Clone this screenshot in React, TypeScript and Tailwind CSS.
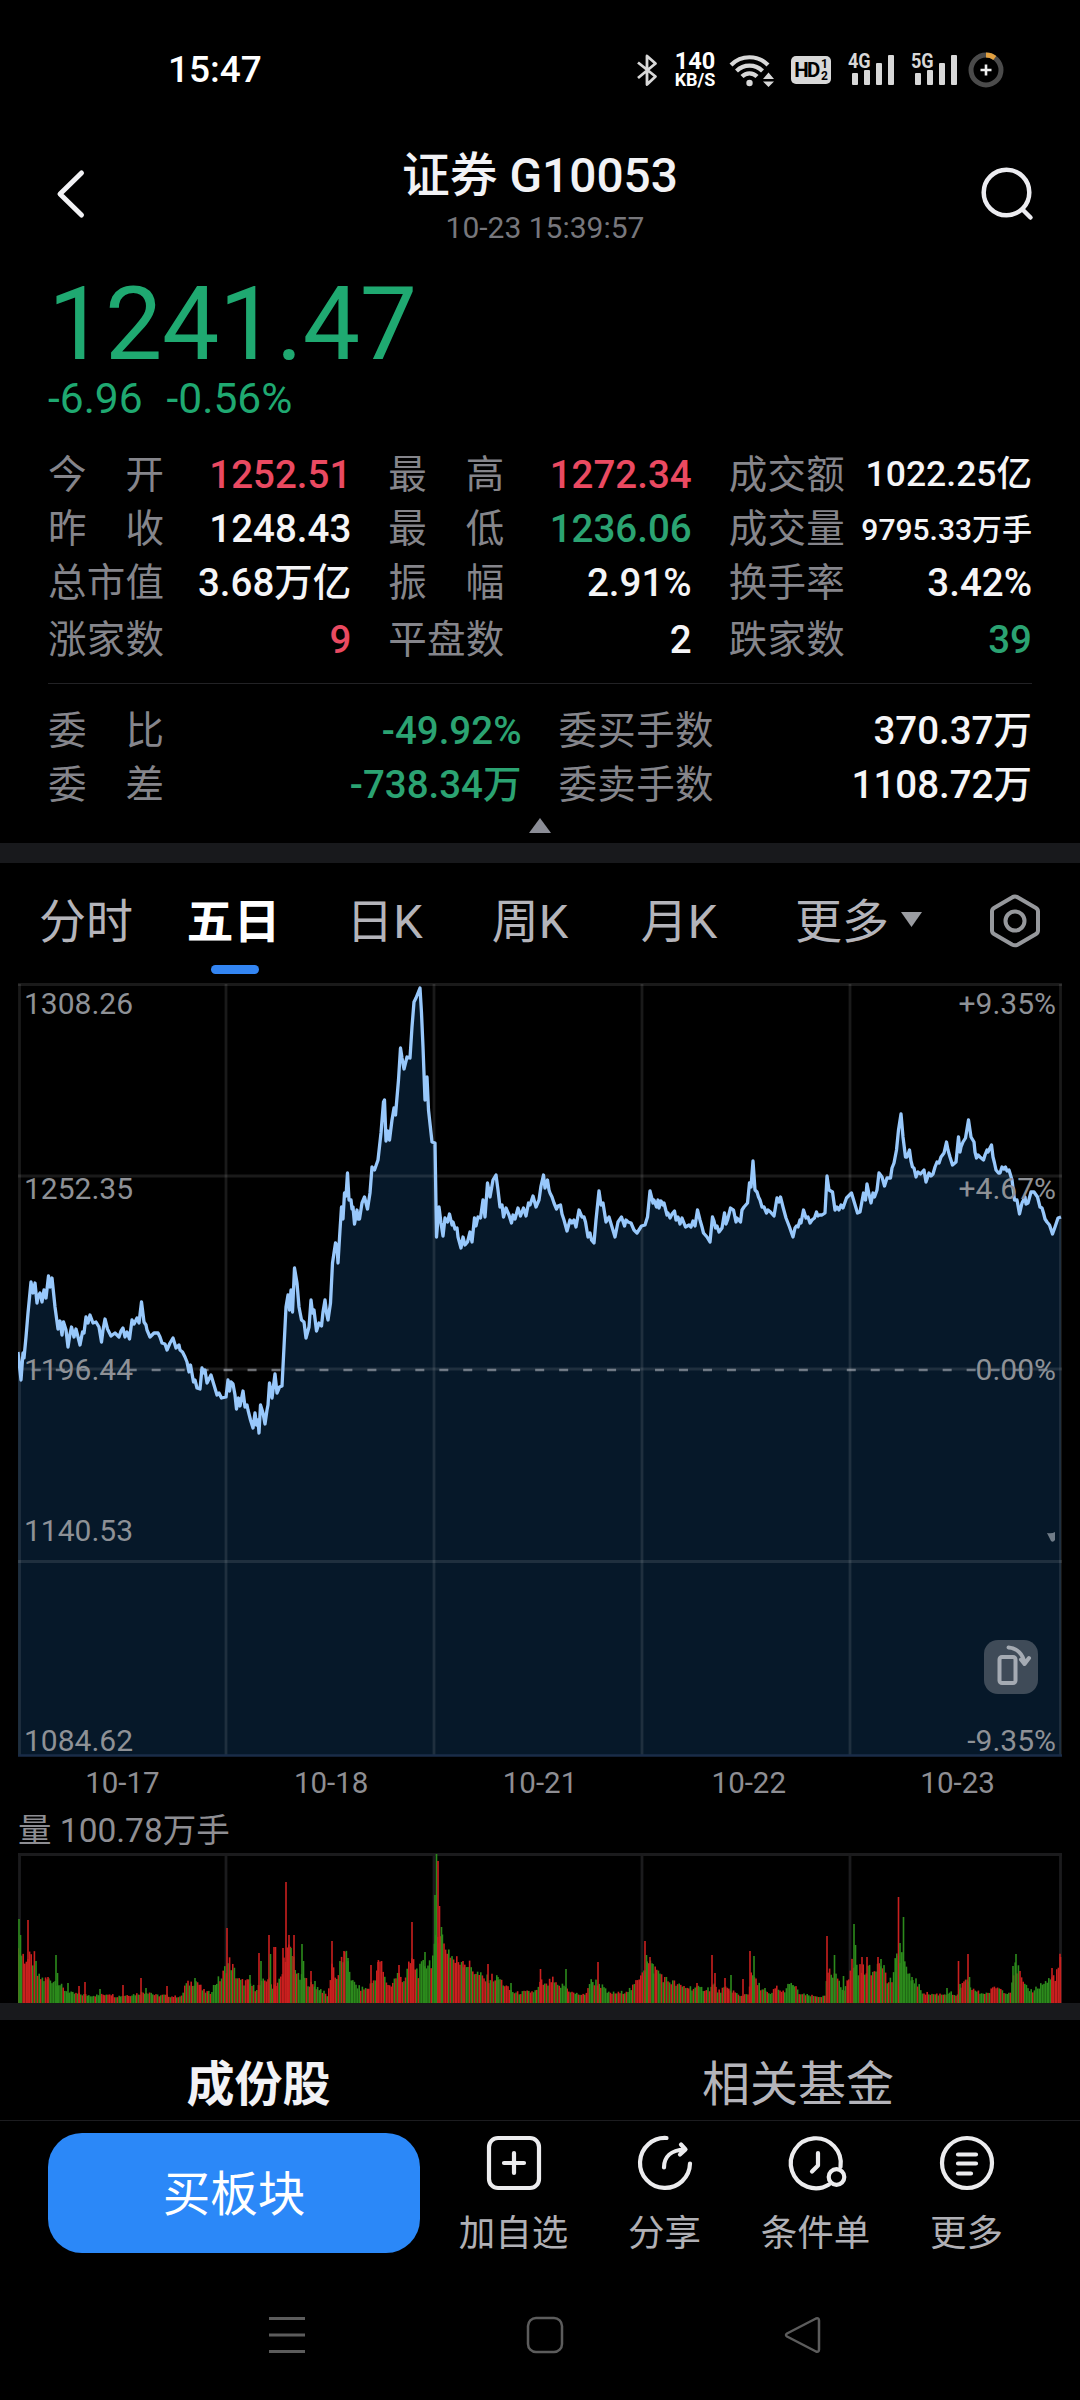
import React from 'react';

type Tone = 'up' | 'down' | 'flat';

const toneClass: Record<Tone, string> = {
  up: 'text-[#ea4a61]',
  down: 'text-[#2ba372]',
  flat: 'text-[#f5f5f7]',
};

type Quote = { label: string; value: string; tone: Tone; size?: string };

const quotes: Quote[] = [
  { label: '今开', value: '1252.51', tone: 'up' },
  { label: '最高', value: '1272.34', tone: 'up' },
  { label: '成交额', value: '1022.25亿', tone: 'flat', size: 'text-[35.5px]' },
  { label: '昨收', value: '1248.43', tone: 'flat' },
  { label: '最低', value: '1236.06', tone: 'down' },
  { label: '成交量', value: '9795.33万手', tone: 'flat', size: 'text-[30px]' },
  { label: '总市值', value: '3.68万亿', tone: 'flat' },
  { label: '振幅', value: '2.91%', tone: 'flat' },
  { label: '换手率', value: '3.42%', tone: 'flat' },
  { label: '涨家数', value: '9', tone: 'up' },
  { label: '平盘数', value: '2', tone: 'flat' },
  { label: '跌家数', value: '39', tone: 'down' },
];

const orders: Quote[] = [
  { label: '委比', value: '-49.92%', tone: 'down' },
  { label: '委买手数', value: '370.37万', tone: 'flat' },
  { label: '委差', value: '-738.34万', tone: 'down' },
  { label: '委卖手数', value: '1108.72万', tone: 'flat' },
];

const tabs = [
  { name: '分时', width: 'w-[146px]' },
  { name: '五日', width: 'w-[149px]' },
  { name: '日K', width: 'w-[153px]' },
  { name: '周K', width: 'w-[138px]' },
  { name: '月K', width: 'w-[160px]' },
];

// Price line, one string per trading day
const priceLine = [
  '18,1352 21,1380 23,1353 24,1358 26,1337 28,1313 31,1282 33,1293 35,1283 37,1303 38,1297 40,1293 42,1302 44,1290 46,1298 48.5,1276 50,1287 52,1278 55,1307 58,1329 60,1321 62,1335 63.5,1322 66,1330 68,1347 70,1334 71.5,1327 74,1337 76,1329 78,1337 80,1345 82.5,1332 84,1333 86,1317 88,1323 90,1315 93,1323 96,1322 99,1327 101.5,1342 103,1330 105,1319 107.5,1329 111,1336 115,1333 119,1337 121,1331 123,1328 125,1337 127,1332 129.5,1339 132,1320 134,1324 137,1318 139,1323 141.5,1302 144,1322 146,1325 147,1330 150,1337 154,1333 158,1333 160,1337 162,1343 165,1344 167,1350 170,1343 173,1338 176,1348 179,1345 180,1350 182.5,1352 185,1357 187,1362 189,1372 190.5,1365 193.5,1382 195,1380 197,1388 200,1389 202,1368 204,1373 205,1370 207,1383 209,1379 211,1375 214,1385 217,1395 219,1393 221.5,1398 226,1397',
  '228,1380 229.5,1391 231,1382 233,1384 235,1395 236.5,1409 238.5,1398 240,1406 243,1391 245,1407 247,1405 248,1410 250.5,1420 253,1428 255,1413 256.5,1425 258,1420 259,1433 260.5,1405 263,1413 265,1424 267,1410 268,1405 269.5,1383 272,1398 275,1374 277,1393 279.5,1387 282,1386 284,1347 286,1307 288,1295 289.5,1310 291,1290 292.5,1312 294.5,1268 297,1283 299,1307 301.5,1320 304,1322 306,1338 309,1327 311,1300 312.5,1313 314,1310 316.5,1331 319,1323 321.5,1326 323,1312 325,1300 326.5,1313 328,1320 330.5,1303 332.5,1263 335.5,1243 337,1246 338,1263 340,1230 341.5,1207 343,1219 344.5,1193 346,1196 347.5,1173 349,1200 351,1200 352,1209 353,1207 354.5,1224 357,1210 358,1219 359.5,1219 362,1203 364.5,1197 367.5,1209 370,1193 372,1167 374.5,1170 378,1160 381,1133 383.5,1102 384.5,1100 386,1141 388,1131 389.5,1140 392,1120 394,1108 395.5,1115 398.5,1080 400.5,1048 402,1058 404,1069 407,1057 410,1058 412,1027 414,1002 416,998 420,988 421.5,1013 423,1047 425,1100 427,1077 428.5,1110 432,1142 435,1143 436.5,1237',
  '439,1207 441,1223 443,1236 445,1218 447.5,1222 449.5,1214 452,1225 453,1222 455,1229 457,1228 458,1237 461,1248 463,1237 465,1245 467.5,1242 470,1232 472,1242 474.5,1218 476,1226 478,1217 480.5,1218 483,1200 485,1217 487.5,1183 490,1197 493,1180 496,1175 498,1190 500,1207 502,1205 503.5,1217 506,1208 509,1215 511.5,1223 513,1215 515,1219 518,1208 520.5,1216 523.5,1208 526,1216 528.5,1203 530,1205 533,1196 536,1207 539,1200 541,1186 543.5,1175 545,1188 547.5,1180 549,1190 550,1193 552,1197 554,1203 556.5,1209 558,1206 560.5,1205 562,1214 564,1220 567,1231 570,1220 572,1223 574,1220 576,1227 579,1210 582,1217 584,1217 585.5,1222 588,1237 590,1233 591.5,1240 594,1243 596,1220 599,1191 601,1205 603,1203 606,1222 609,1217 612,1227 615,1237 618,1222 621.5,1217 624.5,1226 626,1220 628,1222 631,1223 634,1230 637,1233 641.5,1226',
  '645,1225 647.5,1217 650,1191 653,1203 654,1200 656.5,1207 658,1200 659,1208 661,1201 663,1205 664,1203 667,1215 668,1213 670,1218 672,1214 674.5,1211 676,1220 678,1217 680,1224 682,1218 685.5,1227 689,1225 691,1227 693,1221 695,1226 697.5,1210 700,1220 702,1227 703.5,1233 707,1237 710,1242 712.5,1217 714,1221 715.5,1228 717,1226 719,1232 722,1228 724.5,1213 726,1224 727.5,1220 730.5,1208 733.5,1210 736,1222 737,1218 740.5,1222 742,1210 744,1207 747.5,1203 749.5,1183 751,1187 753,1161 755,1190 757,1192 758.5,1197 760,1200 762,1207 764,1207 766.5,1213 768,1210 770.5,1212 774,1216 777,1198 779,1202 780.5,1197 783,1207 786,1218 789.5,1227 793,1237 795,1228 796.5,1226 798,1227 800,1220 801,1223 803.5,1210 806,1218 808,1217 810,1223 812,1220 814.5,1218 816.5,1212 818,1216 819.5,1215 822,1215 825,1213 827,1176 829,1190 832.5,1192 835,1210 837,1207 839,1210 841,1205 843,1208 846.5,1198 851.5,1193',
  '854.5,1203 857.5,1213 860,1212 863.5,1193 865.5,1200 867,1184 869,1194 871,1203 873,1193 874.5,1197 877,1190 879,1173 882,1177 884.5,1186 887,1178 890.5,1178 892,1168 894,1163 896.5,1150 898.5,1130 901,1114 903,1137 905.5,1157 907,1157 909.5,1150 911,1161 912.5,1167 914,1168 916,1177 918,1172 920.5,1174 924,1170 926,1182 929,1173 931,1176 933,1174 935,1167 937,1162 939,1163 941,1157 944,1153 946.5,1142 948,1150 950,1157 952.5,1165 956,1162 958.5,1137 960,1152 961,1147 963,1142 965.5,1138 968.5,1120 971,1137 974,1142 975,1152 976.5,1158 978,1155 980,1157 983.5,1160 985,1155 987,1150 988,1152 989,1150 991.5,1145 993,1157 994.5,1163 996,1170 998.5,1173 1000,1173 1002,1167 1004,1169 1005.5,1167 1007,1171 1009,1170 1012,1180 1014.5,1200 1017,1200 1019.5,1214 1022,1203 1025,1197 1026,1204 1028,1203 1031,1192 1034,1192 1037.5,1197 1040,1207 1042,1208 1043.5,1213 1045,1219 1047,1222 1049.5,1225 1052.5,1234 1055,1227 1058,1218 1061,1217',
].join(' ');

// Volume envelope as [x, height] knots, and the single bars that stick out of it
const volumeBase = [
  [18, 48], [22, 42], [28, 38], [35, 38], [38, 22], [45, 20], [52, 20], [58, 18], [63, 12], [70, 8], [80, 7], [90, 6], [100, 6], [110, 8], [115, 5], [125, 6],
  [135, 7], [145, 9], [150, 9], [155, 6], [165, 6], [172, 5], [182, 5], [185, 15], [190, 17], [197, 19], [203, 10], [210, 8], [216, 18], [222, 22], [226, 32],
  [230, 36], [235, 26], [240, 18], [248, 18], [255, 12], [260, 15], [268, 22], [272, 14], [278, 18], [282, 22], [285, 45], [290, 45], [294, 38], [298, 22],
  [305, 20], [312, 15], [320, 12], [328, 5], [332, 35], [337, 20], [342, 40], [348, 38], [352, 18], [360, 12], [368, 12], [374, 20], [380, 38], [385, 20],
  [390, 14], [398, 25], [404, 20], [412, 38], [418, 26], [424, 34], [430, 36], [434, 42], [440, 70], [444, 50], [448, 48], [455, 36], [462, 38], [470, 32],
  [478, 25], [485, 20], [492, 22], [500, 20], [508, 12], [515, 8], [530, 9], [537, 10], [541, 18], [546, 14], [552, 20], [558, 13], [564, 15], [567, 12],
  [573, 8], [585, 6], [590, 18], [597, 18], [602, 14], [608, 8], [620, 8], [632, 12], [638, 20], [642, 30], [648, 35], [654, 30], [660, 26], [665, 20],
  [672, 18], [680, 14], [690, 13], [700, 12], [710, 12], [714, 16], [718, 9], [724, 12], [733, 10], [740, 5], [748, 8], [752, 26], [756, 18], [762, 12],
  [770, 6], [777, 14], [782, 8], [788, 14], [793, 16], [800, 7], [815, 5], [825, 5], [828, 28], [832, 22], [838, 22], [843, 11], [848, 18], [852, 35],
  [858, 30], [862, 28], [867, 32], [872, 24], [877, 36], [882, 40], [887, 18], [892, 20], [896, 36], [900, 44], [904, 42], [908, 22], [915, 20], [922, 9],
  [930, 7], [945, 7], [950, 9], [957, 4], [960, 14], [967, 18], [972, 12], [980, 8], [988, 8], [996, 14], [1004, 10], [1010, 8], [1014, 30], [1018, 30],
  [1024, 14], [1032, 10], [1042, 16], [1050, 20], [1056, 24], [1061, 40],
];

const volumeSpikes: [number, number, string][] = [
  [19, 84, 'g'], [20.5, 68, 'g'], [28, 83, 'r'], [48, 26, 'r'], [56, 48, 'g'], [57.5, 30, 'g'], [68, 20, 'g'], [79, 17, 'r'], [85, 21, 'r'], [100, 14, 'g'], [123, 18, 'r'],
  [141, 25, 'r'], [146, 15, 'g'], [167, 17, 'r'], [195, 25, 'g'], [227, 75, 'r'], [250, 28, 'g'], [259, 50, 'r'], [261, 42, 'g'], [269, 68, 'r'], [270.5, 49, 'g'],
  [274, 56, 'r'], [275.5, 56, 'r'], [283, 55, 'r'], [286, 121, 'r'], [289, 68, 'r'], [291, 55, 'g'], [294, 68, 'r'], [302, 59, 'g'], [303.5, 42, 'g'], [311, 32, 'r'],
  [315, 22, 'g'], [332, 62, 'r'], [344, 52, 'r'], [348, 45, 'g'], [371, 38, 'r'], [378, 41, 'r'], [399, 38, 'r'], [412, 81, 'r'], [425, 51, 'g'], [435, 108, 'g'],
  [436.5, 149, 'g'], [438, 142, 'r'], [439.5, 97, 'r'], [441.5, 76, 'g'], [463, 42, 'r'], [488, 39, 'r'], [498, 26, 'g'], [511, 20, 'g'], [540.5, 34, 'r'], [566, 34, 'g'],
  [598, 41, 'r'], [645, 62, 'r'], [646.5, 48, 'g'], [650, 46, 'r'], [653, 39, 'g'], [697, 20, 'r'], [712, 48, 'r'], [715, 30, 'r'], [725, 25, 'r'], [731, 28, 'g'],
  [743, 24, 'r'], [750, 52, 'r'], [754, 47, 'g'], [765, 15, 'g'], [793, 18, 'g'], [827, 67, 'r'], [834.5, 48, 'g'], [843.5, 27, 'g'], [854, 79, 'g'], [855.5, 58, 'g'],
  [862, 46, 'r'], [867, 46, 'r'], [878, 46, 'r'], [881, 44, 'g'], [898.5, 106, 'r'], [900, 60, 'g'], [903.5, 86, 'g'], [912, 26, 'g'], [947, 15, 'g'], [958.5, 42, 'r'],
  [960, 19, 'g'], [968, 49, 'r'], [969.5, 26, 'g'], [1013, 37, 'g'], [1016, 49, 'g'], [1052, 35, 'r'], [1060.5, 46, 'r'],
];

// x ranges in which nearly every bar has one colour
const volumeRuns: [number, number, string][] = [
  [24, 31, 'r'], [53, 58, 'g'], [212, 219, 'g'], [283, 289, 'r'], [298, 303, 'g'], [328, 335, 'r'], [350, 358, 'g'], [376, 384, 'r'], [410, 416, 'r'], [420, 429, 'g'],
  [540, 543, 'r'], [562, 567, 'g'], [636, 642, 'r'], [696, 703, 'g'], [784, 793, 'g'], [846, 852, 'r'], [906, 916, 'g'], [1042, 1049, 'g'], [1052, 1061, 'r'],
];

const noise = (n: number) => {
  const s = Math.sin(n * 12.9898) * 43758.5453;
  return s - Math.floor(s);
};

const volumeBars = (() => {
  const bars: { x: number; h: number; c: string }[] = [];
  let k = 0;
  for (let i = 0; i < 652; i++) {
    const x = 18.4 + i * 1.6;
    if (x > 1061) break;
    while (k < volumeBase.length - 2 && volumeBase[k + 1][0] < x) k++;
    const [x0, h0] = volumeBase[k];
    const [x1, h1] = volumeBase[k + 1];
    const base = h0 + ((h1 - h0) * (x - x0)) / (x1 - x0);
    const run = volumeRuns.find(([a, b]) => x >= a && x <= b);
    const mixed = noise(i * 3 + 1) > (i % 2 ? 0.8 : 0.2) ? 'r' : 'g';
    bars.push({ x, h: 1 + base * (0.88 + 0.46 * noise(i + 3)), c: run ? run[2] : mixed });
  }
  volumeSpikes.forEach(([x, h, c]) => bars.push({ x, h, c }));
  return bars;
})();

const gridX = [226, 434, 642, 850];

const QuoteCell = ({ label, value, tone, size = 'text-[38.5px]' }: Quote) => (
  <div className="flex items-center justify-between pt-[2px]">
    <div className={`flex justify-between text-[38.5px] text-[#85858b] ${label.length < 4 ? 'w-[116px]' : 'w-[155px]'}`}>
      {label.split('').map((ch, i) => (
        <span key={i}>{ch}</span>
      ))}
    </div>
    <span className={`font-medium ${size} ${toneClass[tone]}`}>{value}</span>
  </div>
);

const Signal = ({ name }: { name: string }) => (
  <div className="relative h-[34px] w-[50px]">
    <svg className="h-full w-full" viewBox="0 0 50 34" fill="#d8d8d8">
      <rect x="4" y="20" width="6" height="12" rx="1" />
      <rect x="16" y="17" width="6" height="15" rx="1" />
      <rect x="28" y="10" width="6" height="22" rx="1" />
      <rect x="40" y="2" width="6" height="30" rx="1" />
    </svg>
    <span className="absolute top-0 left-0 origin-left scale-x-[0.88] text-[20.500px] leading-[16px] font-bold text-[#d8d8d8]">{name}</span>
  </div>
);

const StatusBar = () => (
  <div className="flex h-[140px] items-center pr-[76px] pl-[168px]">
    <span className="text-[37px] font-medium text-white">15:47</span>
    <div className="ml-auto flex items-center">
      <svg className="mr-[14px] h-[34px] w-[24px]" viewBox="0 0 24 34" fill="none" stroke="#d8d8d8" strokeWidth="2.8" strokeLinejoin="round">
        <path d="M3 9.5 20.5 23.5 12 31.5V3l8.5 7.5L3 25" />
      </svg>
      <div className="mr-3 flex w-[44px] flex-col items-center font-bold text-white">
        <span className="text-[23.500px] leading-[19px]">140</span>
        <span className="text-[18px] leading-[18px]">KB/S</span>
      </div>
      <svg className="mr-[14px] h-[34px] w-[46px]" viewBox="0 0 46 34" fill="none">
        <path d="M2 12a26 26 0 0 1 37 0M7.500 18a18.500 18.500 0 0 1 26 0M13 23.500a10.500 10.500 0 0 1 15 0" stroke="#d8d8d8" strokeWidth="4.200" />
        <circle cx="20.500" cy="30" r="3.200" fill="#d8d8d8" />
        <path d="M34 26h11l-5.500-6.500zM34 28.500h11l-5.500 5.500z" fill="#d8d8d8" />
      </svg>
      <div className="mr-[17px] ml-[2px] flex h-[28px] w-[40px] items-center justify-center rounded-[5px] bg-[#d8d8d8] text-black">
        <span className="text-[20.500px] leading-none font-bold tracking-[-1.5px]">HD</span>
        <span className="ml-[2px] flex flex-col text-[12px] leading-[12px] font-bold">
          <span>1</span>
          <span>2</span>
        </span>
      </div>
      <div className="mr-[13px]">
        <Signal name="4G" />
      </div>
      <div className="mr-[7px]">
        <Signal name="5G" />
      </div>
      <svg className="h-[36px] w-[36px]" viewBox="0 0 36 36" fill="none">
        <circle cx="18" cy="18" r="15" stroke="#4b4b4b" strokeWidth="5" />
        <path d="M18 3a15 15 0 0 1 8.800 2.900" stroke="#e2a040" strokeWidth="5" />
        <path d="M12.500 18h11M18 12.500v11" stroke="#f0f0f0" strokeWidth="2.600" />
      </svg>
    </div>
  </div>
);

const Header = () => (
  <header className="flex h-[120px] items-start justify-between pr-[42px] pl-[52px]">
    <svg className="mt-[26px] h-[56px] w-[36px]" viewBox="0 0 36 56" fill="none" stroke="#f2f2f5" strokeWidth="5" strokeLinecap="round" strokeLinejoin="round">
      <path d="M29.500 7 8 28l21.500 21" />
    </svg>
    <div className="flex flex-col items-center pl-[22px]">
      <h1 className="mt-[6px] mr-2 text-[47.800px] leading-[60px] font-medium text-[#f2f2f5]">证券 G10053</h1>
      <p className="mt-[2px] ml-[2px] text-[30px] leading-[40px] text-[#77777c]">10-23 15:39:57</p>
    </div>
    <svg className="mt-[22px] h-[60px] w-[60px]" viewBox="0 0 60 60" fill="none" stroke="#ececf0" strokeWidth="4.500" strokeLinecap="round">
      <circle cx="28.500" cy="30.500" r="22.800" />
      <path d="m44.500 47.500 8 8" />
    </svg>
  </header>
);

const PriceChart = () => (
  <div className="relative ml-[18px] h-[774px] w-[1044px] text-[30px] leading-[30px] text-[#8e9196]">
    <svg className="h-full w-full" viewBox="18 983 1044 774" fill="none">
      <polygon points={`18,1756 ${priceLine} 1061,1756`} fill="#061829" />
      <g stroke="#ffffff" strokeOpacity="0.1" strokeWidth="2.800">
        <path d="M18 984.500h1044M18 1176h1044M18 1369h1044M18 1561.500h1044" />
        <path d="M19.500 984v772M1060.500 984v772" />
        {gridX.map((x) => (
          <path key={x} d={`M${x} 984v772`} />
        ))}
      </g>
      <path d="M18 1755.500h1044" stroke="#1a2c48" strokeWidth="2.500" />
      <path d="M31.800 1370H1052" stroke="#c8ccd4" strokeOpacity="0.5" strokeWidth="2.500" strokeDasharray="9 14.970" />
      <polyline points={priceLine} stroke="#98c8fb" strokeWidth="3.300" strokeLinejoin="round" />
      <path d="M1047 1533q5 1 8-1v8q-2 3-4 1z" fill="#b8c0c8" fillOpacity="0.6" />
    </svg>
    <span className="absolute top-[6px] left-[6px]">1308.26</span>
    <span className="absolute top-[191px] left-[6px]">1252.35</span>
    <span className="absolute top-[372px] left-[6px]">1196.44</span>
    <span className="absolute top-[533px] left-[6px]">1140.53</span>
    <span className="absolute top-[743px] left-[6px]">1084.62</span>
    <span className="absolute top-[6px] right-[6px]">+9.35%</span>
    <span className="absolute top-[191px] right-[6px]">+4.67%</span>
    <span className="absolute top-[372px] right-[6px]">0.00%</span>
    <span className="absolute top-[743px] right-[6px]">-9.35%</span>
    <div className="absolute top-[657px] right-[24px] h-[54px] w-[54px] rounded-[14px] bg-[#3f4b58]">
      <svg className="h-full w-full" viewBox="0 0 54 54" fill="none" stroke="#a5abb3" strokeWidth="4" strokeLinecap="round" strokeLinejoin="round">
        <rect x="15.500" y="17" width="16" height="26" rx="2.500" />
        <path d="M24.500 7.500C33 8 39 14 40.500 23M37 19.500l3.500 4.500 4.500-6" />
      </svg>
    </div>
  </div>
);

const VolumeChart = () => (
  <svg className="ml-[18px] h-[151px] w-[1044px]" viewBox="18 1852 1044 151" fill="none">
    <g stroke="#1b1b1d" strokeWidth="2.800">
      <path d="M18 1854.500h1044M19.500 1854v150M1060.500 1854v150" />
      {gridX.map((x) => (
        <path key={x} d={`M${x} 1854v150`} />
      ))}
    </g>
    {volumeBars.map((b, i) => (
      <rect key={i} x={b.x - 0.8} y={2003 - b.h} width="1.6" height={b.h} fill={b.c === 'r' ? '#c9201f' : '#2c8a1c'} />
    ))}
  </svg>
);

const AddIcon = () => (
  <>
    <rect x="2" y="2" width="50" height="50" rx="9" />
    <path d="M27 17v20M17 27h20" />
  </>
);

const ShareIcon = () => (
  <>
    <path d="M28.500 2A25 25 0 1 0 52 27.500" />
    <path d="M26 31.500c0-10.500 7-17.500 20.500-18M43 8.500l4.500 5-5.500 5" />
  </>
);

const ConditionIcon = () => (
  <>
    <path d="M40 48.500A25 25 0 1 1 51.500 31" />
    <path d="M29 17v12.500L23 35.500" />
    <circle cx="47.500" cy="41" r="7.800" />
  </>
);

const MoreIcon = () => (
  <>
    <circle cx="27" cy="27" r="25" />
    <path d="M18 18.500h18M18 27.500h18M18 37.500h13" />
  </>
);

const actions = [
  { name: '加自选', icon: <AddIcon /> },
  { name: '分享', icon: <ShareIcon /> },
  { name: '条件单', icon: <ConditionIcon /> },
  { name: '更多', icon: <MoreIcon /> },
];

export default function App() {
  return (
    <div lang="zh-CN" className="flex h-[2400px] w-[1080px] flex-col overflow-hidden bg-black font-[Roboto,'Noto_Sans_CJK_SC',sans-serif] whitespace-nowrap">
      <StatusBar />
      <Header />

      <section className="h-[187px] pl-[48px] text-[#1fa971]">
        <p className="pt-[9px] text-[102px] leading-[110px] tracking-[-0.3px]">1241.47</p>
        <p className="-mt-px flex gap-[24px] text-[42.500px] leading-[42px]">
          <span>-6.96</span>
          <span>-0.56%</span>
        </p>
      </section>

      <section className="h-[396px] pr-[48px] pl-[48px]">
        <div className="grid grid-cols-3 grid-rows-[54px_54px_54px_60px] gap-x-[37px]">
          {quotes.map((q) => (
            <QuoteCell key={q.label} {...q} />
          ))}
        </div>
        <div className="mt-[14px] h-px bg-[#222225]" />
        <div className="mt-[19px] grid grid-cols-2 grid-rows-[54px_54px] gap-x-[37px]">
          {orders.map((q) => (
            <QuoteCell key={q.label} {...q} />
          ))}
        </div>
        <svg className="mx-auto mt-[7px] h-[15px] w-[22px]" viewBox="0 0 22 15">
          <path d="M11 0 22 15H0z" fill="#8b8d96" />
        </svg>
      </section>

      <div className="h-[20px] bg-[#18191c]" />

      <nav className="flex h-[120px] pl-[13px] text-[47px] leading-[60px] text-[#b4b4ba]">
        {tabs.map((t) => (
          <div key={t.name} className={`flex flex-col items-center pt-[29px] ${t.width}`}>
            <span className={t.name === '五日' ? 'font-bold text-white' : ''}>{t.name}</span>
            {t.name === '五日' && <i className="mt-[13px] ml-[2px] h-[9px] w-[48px] rounded-full bg-[#3385f2]" />}
          </div>
        ))}
        <div className="flex w-[199px] items-start justify-center gap-[12px] pt-[29px]">
          <span>更多</span>
          <svg className="mt-[20px] h-[15px] w-[21px]" viewBox="0 0 21 15">
            <path d="M0 0h21L10.500 15z" fill="#9a9ca1" />
          </svg>
        </div>
        <svg className="mt-[30px] ml-[30px] h-[56px] w-[54px]" viewBox="0 0 54 56" fill="none" stroke="#96989c" strokeWidth="4" strokeLinejoin="round">
          <path d="M27 3.500q1.500 0 3 1l18 10.500q2 1.200 2 3.500v19q0 2.300-2 3.500L30 51.500q-3 1.600-6 0L6 41q-2-1.200-2-3.500v-19Q4 16.200 6 15L24 4.500q1.500-1 3-1z" />
          <circle cx="27" cy="28" r="9.500" />
        </svg>
      </nav>

      <PriceChart />
      <div className="flex h-[51px] items-center pr-[18px] pl-[18px] pt-px text-[29.500px] text-[#8e8e93]">
        {['10-17', '10-18', '10-21', '10-22', '10-23'].map((d) => (
          <span key={d} className="flex-1 text-center">
            {d}
          </span>
        ))}
      </div>
      <p className="h-[44px] pl-[18px] text-[33.500px] leading-[46px] text-[#8e8e93]">量 100.78万手</p>
      <VolumeChart />

      <div className="h-[17px] bg-[#18191c]" />

      <div className="flex h-[101px] border-b border-[#1c1c1f] text-[48px] leading-[130px]">
        <span className="w-[517px] text-center font-bold text-[#f2f2f5]">成份股</span>
        <span className="w-[562px] text-center text-[#b4b4ba]">相关基金</span>
      </div>

      <div className="flex pt-[12px] pl-[48px]">
        <button className="mr-[18px] h-[120px] w-[372px] rounded-[34px] bg-[#2b88f8] pt-[6px] text-[47.500px] text-white">买板块</button>
        {actions.map((a) => (
          <div key={a.name} className="flex w-[151px] flex-col items-center pt-[3px]">
            <svg className="h-[54px] w-[54px] overflow-visible" viewBox="0 0 54 54" fill="none" stroke="#ececee" strokeWidth="4.200" strokeLinecap="round" strokeLinejoin="round">
              {a.icon}
            </svg>
            <span className="mt-[21px] text-[36.500px] leading-[46px] text-[#b0b0b5]">{a.name}</span>
          </div>
        ))}
      </div>

      <div className="mt-[59px] flex pl-[268px]">
        <svg className="h-[38px] w-[38px]" viewBox="0 0 38 38" fill="none" stroke="#5c5c5c" strokeWidth="2.800">
          <path d="M1 2.500h36M1 19h36M1 35.500h36" />
        </svg>
        <svg className="ml-[220px] h-[38px] w-[38px]" viewBox="0 0 38 38" fill="none" stroke="#5c5c5c" strokeWidth="2.500">
          <rect x="2" y="2" width="34" height="34" rx="8" />
        </svg>
        <svg className="ml-[220px] h-[38px] w-[38px]" viewBox="0 0 38 38" fill="none" stroke="#5c5c5c" strokeWidth="2.500" strokeLinejoin="round">
          <path d="M3 17.500 32 2.500q3-1 3 2v29q0 3-3 2L3 20.500q-2-1.500 0-3z" />
        </svg>
      </div>
    </div>
  );
}
